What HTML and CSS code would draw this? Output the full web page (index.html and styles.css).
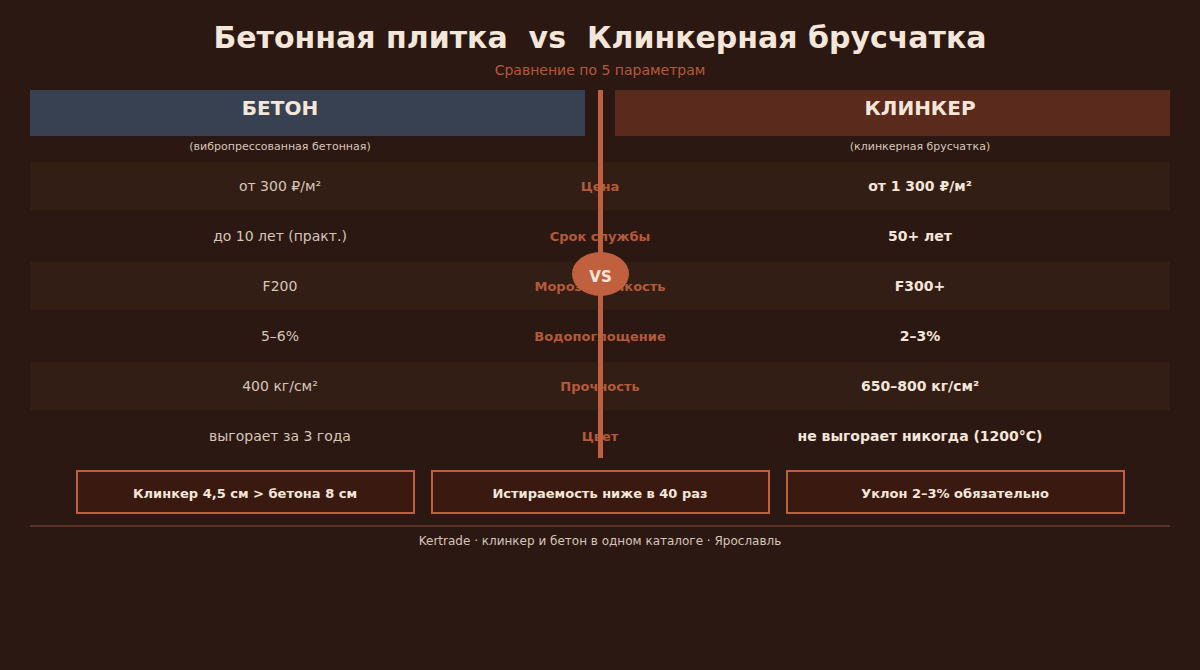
FILE: index.html
```html
<!DOCTYPE html>
<html lang="ru">
<head>
<meta charset="utf-8">
<title>Бетонная плитка vs Клинкерная брусчатка</title>
<link rel="stylesheet" href="styles.css">
</head>
<body>
<div class="page">
  <h1 class="title">Бетонная плитка  vs  Клинкерная брусчатка</h1>
  <div class="subtitle">Сравнение по 5 параметрам</div>

  <div class="compare">
    <div class="heads">
      <div class="bar bar-left">БЕТОН</div>
      <div class="bar-gap"></div>
      <div class="bar bar-right">КЛИНКЕР</div>
    </div>
    <div class="captions">
      <div class="cap">(вибропрессованная бетонная)</div>
      <div></div>
      <div class="cap">(клинкерная брусчатка)</div>
    </div>
    <div class="rows">
      <div class="row band"><div class="v-left">от 300 ₽/м²</div><div class="label">Цена</div><div class="v-right">от 1 300 ₽/м²</div></div>
      <div class="row"><div class="v-left">до 10 лет (практ.)</div><div class="label">Срок службы</div><div class="v-right">50+ лет</div></div>
      <div class="row band"><div class="v-left">F200</div><div class="label">Морозостойкость</div><div class="v-right">F300+</div></div>
      <div class="row"><div class="v-left">5–6%</div><div class="label">Водопоглощение</div><div class="v-right">2–3%</div></div>
      <div class="row band"><div class="v-left">400 кг/см²</div><div class="label">Прочность</div><div class="v-right">650–800 кг/см²</div></div>
      <div class="row"><div class="v-left">выгорает за 3 года</div><div class="label">Цвет</div><div class="v-right">не выгорает никогда (1200°C)</div></div>
    </div>
    <div class="vline"></div>
    <div class="vs">VS</div>
  </div>

  <div class="facts">
    <div class="fact">Клинкер 4,5 см &gt; бетона 8 см</div>
    <div class="fact">Истираемость ниже в 40 раз</div>
    <div class="fact">Уклон 2–3% обязательно</div>
  </div>

  <div class="divider"></div>
  <div class="footer">Kertrade · клинкер и бетон в одном каталоге · Ярославль</div>
</div>
</body>
</html>
```

FILE: styles.css
```css
html, body {
  margin: 0;
  padding: 0;
  background: #2b1812;
}
body {
  font-family: "DejaVu Sans", Verdana, sans-serif;
  color: #f5e6da;
  width: 1200px;
  height: 670px;
  overflow: hidden;
}
.page {
  padding: 21px 30px 0;
}
.title {
  margin: 0;
  font-size: 30px;
  line-height: 34px;
  font-weight: bold;
  text-align: center;
  white-space: pre;
  color: #f5e6da;
}
.subtitle {
  margin-top: 6px;
  font-size: 14px;
  line-height: 18px;
  text-align: center;
  color: #b45a3b;
}
.compare {
  position: relative;
  margin-top: 11px;
}
.heads {
  display: grid;
  grid-template-columns: 555px 30px 555px;
}
.bar {
  height: 46px;
  box-sizing: border-box;
  padding-top: 6px;
  font-size: 20px;
  line-height: 24px;
  font-weight: bold;
  text-align: center;
  color: #f5e6da;
}
.bar-left {
  background: #374151;
  padding-right: 55px;
}
.bar-right {
  background: #5a2a1c;
  padding-left: 55px;
}
.captions {
  display: grid;
  grid-template-columns: 500px 140px 500px;
  height: 26px;
}
.cap {
  font-size: 11px;
  line-height: 22px;
  text-align: center;
  color: #d6c5b8;
}
.rows {
  display: flex;
  flex-direction: column;
  gap: 2px;
}
.row {
  display: grid;
  grid-template-columns: 500px 140px 500px;
  height: 48px;
  align-items: center;
  text-align: center;
}
.row.band {
  background: #321e15;
}
.v-left {
  font-size: 14px;
  color: #d6c5b8;
}
.label {
  font-size: 13px;
  font-weight: bold;
  color: #b45a3b;
  white-space: nowrap;
}
.v-right {
  font-size: 14px;
  font-weight: bold;
  color: #f5e6da;
}
.vline {
  position: absolute;
  left: 568px;
  top: 0;
  width: 5px;
  height: 368px;
  background: #c0603f;
}
.vs {
  position: absolute;
  left: 542px;
  top: 162px;
  width: 57px;
  height: 44px;
  box-sizing: border-box;
  padding-top: 6px;
  border-radius: 50%;
  background: #c0603f;
  color: #f5e6da;
  font-size: 15px;
  font-weight: bold;
  display: flex;
  align-items: center;
  justify-content: center;
}
.facts {
  display: flex;
  justify-content: center;
  gap: 16px;
  margin-top: 10px;
}
.fact {
  width: 339px;
  height: 44px;
  box-sizing: border-box;
  border: 2px solid #c0603f;
  background: #3a1a10;
  padding-top: 3px;
  display: flex;
  align-items: center;
  justify-content: center;
  font-size: 13px;
  font-weight: bold;
  color: #f5e6da;
}
.divider {
  margin-top: 11px;
  height: 2px;
  background: #5c3322;
}
.footer {
  margin-top: 6px;
  font-size: 12px;
  line-height: 16px;
  text-align: center;
  color: #d6c5b8;
}
```
